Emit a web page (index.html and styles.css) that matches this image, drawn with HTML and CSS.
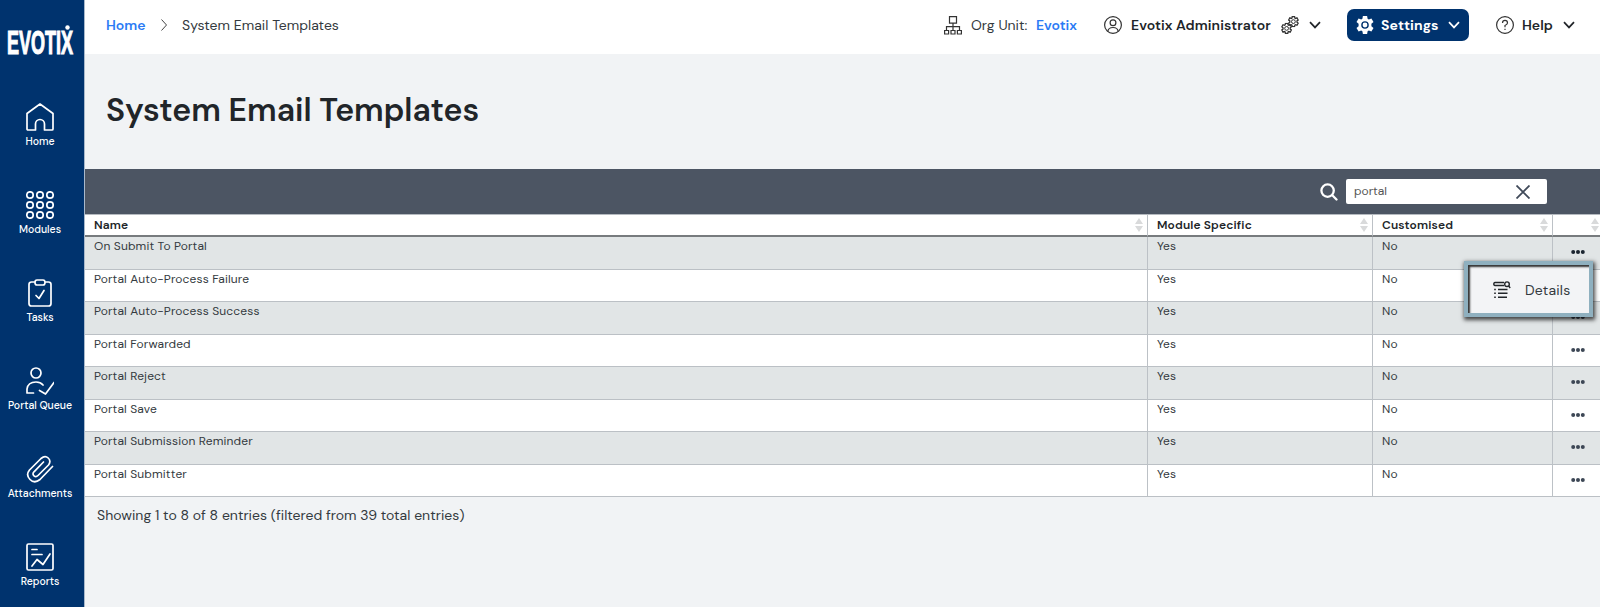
FILE: index.html
```html
<!DOCTYPE html>
<html lang="en">

<head>
    <meta charset="UTF-8">
    <meta name="viewport" content="width=device-width, initial-scale=1.0">
    <title>System Email Templates</title>
    <link rel="stylesheet" href="styles.css">
</head>

<body>
    <!-- Shared icons -->
    <svg class="sprite" width="0" height="0">
        <symbol id="chevron" viewBox="0 0 12 8"><path d="M1 1.2l5 5.2 5-5.2" /></symbol>
        <symbol id="sort" viewBox="0 0 8 14"><path d="M4 0l4 6H0zM0 8h8l-4 6z" /></symbol>
        <symbol id="dots" viewBox="0 0 14 4"><circle cx="2.2" cy="2" r="2" /><circle cx="7" cy="2" r="2" /><circle cx="11.8" cy="2" r="2" /></symbol>
        <symbol id="gear" viewBox="0 0 20 20"><path d="M7.900 1h4.200l.5 2.700 1.200.7 2.600-1 2.100 3.700-2.100 1.700v2.400l2.100 1.700-2.100 3.700-2.600-1-1.200.7-.5 2.700H7.900l-.5-2.700-1.200-.7-2.600 1-2.100-3.700 2.100-1.700V8.800L1.500 7.100l2.100-3.700 2.600 1 1.200-.7z" /></symbol>
    </svg>

    <nav class="sidebar">
        <svg class="logo" width="66" height="30" viewBox="0 0 66 30">
            <text x="0" y="14.800" textLength="66" lengthAdjust="spacingAndGlyphs" transform="scale(1 1.980)">EVOTIX</text>
            <circle cx="60.500" cy="2.500" r="2.200" />
        </svg>
        <a class="nav-item">
            <svg width="28" height="28" viewBox="0 0 28 28"><path d="M1 10.500L14 1l13 9.500V26q0 1-1 1h-7.500v-6a4.500 4.500 0 0 0-9 0v6H2q-1 0-1-1z" /></svg>
            <span>Home</span>
        </a>
        <a class="nav-item">
            <svg width="28" height="28" viewBox="0 0 28 28">
                <circle cx="4" cy="4" r="3.200" /><circle cx="14" cy="4" r="3.200" /><circle cx="24" cy="4" r="3.200" />
                <circle cx="4" cy="14" r="3.200" /><circle cx="14" cy="14" r="3.200" /><circle cx="24" cy="14" r="3.200" />
                <circle cx="4" cy="24" r="3.200" /><circle cx="14" cy="24" r="3.200" /><circle cx="24" cy="24" r="3.200" />
            </svg>
            <span>Modules</span>
        </a>
        <a class="nav-item">
            <svg width="28" height="28" viewBox="0 0 28 28"><path d="M9 3H5.500Q3 3 3 5.500v19Q3 27 5.500 27h17q2.500 0 2.500-2.500v-19Q25 3 22.500 3H19M11 1h6q2 0 2 2.500T17 6h-6Q9 6 9 3.500T11 1zM10 16.500l3 3 5-8" /></svg>
            <span>Tasks</span>
        </a>
        <a class="nav-item">
            <svg width="28" height="28" viewBox="0 0 28 28"><circle cx="10" cy="6" r="5" /><path d="M7.500 26H1v-4q1-7 9-7 4.500 0 7 3M13.500 23.500l6 3.500L28 15.500" /></svg>
            <span>Portal Queue</span>
        </a>
        <a class="nav-item">
            <svg width="28" height="28" viewBox="0 0 28 28"><path d="M26.500 11.500L14 24.500Q8.500 29 4 24.500T3.500 15L15 3.500q4-3.500 7.200-.5t.3 7L12 20.500q-2 2-4 .3t0-4L17.500 7" /></svg>
            <span>Attachments</span>
        </a>
        <a class="nav-item">
            <svg width="28" height="28" viewBox="0 0 28 28"><rect x="1" y="1" width="26" height="26" rx="1.500" /><path d="M6 6.500h5M6 11.500h10M6 23l5-6.500 6 5L24 11" /></svg>
            <span>Reports</span>
        </a>
    </nav>

    <div class="content">
        <header class="topbar">
            <a class="crumb-home">Home</a>
            <svg class="crumb-arrow" width="8" height="12" viewBox="0 0 8 12"><path d="M1.500.5L6.500 6l-5 5.500" /></svg>
            <span class="crumb-page">System Email Templates</span>

            <div class="org">
                <svg class="line-icon" width="18" height="19" viewBox="0 0 18 19"><path d="M5.500.7h7v6.500h-7zM9 7.200v3.500M2.500 14v-3.300h13V14M9 10.700V14M.6 14.500h4v3.500h-4zM7 14.500h4v3.500H7zM13.400 14.500h4v3.500h-4z" /></svg>
                <span class="org-label">Org Unit:</span>
                <a class="org-name">Evotix</a>
            </div>
            <div class="user">
                <svg class="line-icon" width="18" height="18" viewBox="0 0 18 18"><circle cx="9" cy="9" r="8.400" /><circle cx="9" cy="6.800" r="2.900" /><path d="M3.800 15.500q.5-4 5.200-4t5.200 4" /></svg>
                <span class="user-name">Evotix Administrator</span>
                <svg class="line-icon gears" width="18" height="18" viewBox="0 0 18 18">
                    <use href="#gear" x="6.800" y="0" width="11.200" height="11.200" /><circle cx="12.400" cy="5.600" r="1.900" />
                    <use href="#gear" x="0" y="6.800" width="11.200" height="11.200" /><circle cx="5.600" cy="12.400" r="1.900" />
                </svg>
                <svg class="chevron" width="12" height="8"><use href="#chevron" /></svg>
            </div>
            <button class="settings">
                <svg class="settings-gear" width="20" height="20" viewBox="0 0 20 20"><use href="#gear" /><circle cx="10" cy="10" r="3.100" /></svg>
                <span>Settings</span>
                <svg class="chevron" width="12" height="8"><use href="#chevron" /></svg>
            </button>
            <div class="help">
                <svg class="line-icon" width="18" height="18" viewBox="0 0 18 18"><circle cx="9" cy="9" r="8.400" /><path d="M6.500 7q0-2.700 2.500-2.700T11.500 7Q11.500 8.300 9 9.500v1.800M9 12.700V14" /></svg>
                <span class="help-label">Help</span>
                <svg class="chevron" width="12" height="8"><use href="#chevron" /></svg>
            </div>
        </header>

        <h1>System Email Templates</h1>

        <div class="toolbar">
            <svg class="search-icon" width="18" height="18" viewBox="0 0 18 18"><circle cx="7.600" cy="7.600" r="6.200" /><path d="M12.300 12.300l4.200 4.200" /></svg>
            <div class="search-box">
                <span>portal</span>
                <svg width="14" height="14" viewBox="0 0 14 14"><path d="M.5.5l13 13M13.500.5l-13 13" /></svg>
            </div>
        </div>

        <table id="templatesTable">
            <thead>
                <tr>
                    <th class="col-name"><div>Name<svg class="sort" width="8" height="14"><use href="#sort" /></svg></div></th>
                    <th class="col-module"><div>Module Specific<svg class="sort" width="8" height="14"><use href="#sort" /></svg></div></th>
                    <th class="col-custom"><div>Customised<svg class="sort" width="8" height="14"><use href="#sort" /></svg></div></th>
                    <th class="col-actions"><div><svg class="sort" width="8" height="14"><use href="#sort" /></svg></div></th>
                </tr>
            </thead>
            <tbody>
                <tr>
                    <td>On Submit To Portal</td>
                    <td>Yes</td>
                    <td>No</td>
                    <td class="actions active">
                        <svg width="14" height="4"><use href="#dots" /></svg>
                        <div class="menu">
                            <svg width="18" height="18" viewBox="0 0 18 18"><path d="M11 4.500H2Q.8 4.500.8 3T2 1.500h9M5 8.500h9.500M5 12.300h9.500M5 16.300h9M1.200 8.500h1.600M1.200 12.300h1.600M1.200 16.300h1.600" /><circle cx="14" cy="3.200" r="2.300" /><path d="M15.700 5l1.500 2" /></svg>
                            <span>Details</span>
                        </div>
                    </td>
                </tr>
                <tr>
                    <td>Portal Auto-Process Failure</td>
                    <td>Yes</td>
                    <td>No</td>
                    <td class="actions"><svg width="14" height="4"><use href="#dots" /></svg></td>
                </tr>
                <tr>
                    <td>Portal Auto-Process Success</td>
                    <td>Yes</td>
                    <td>No</td>
                    <td class="actions"><svg width="14" height="4"><use href="#dots" /></svg></td>
                </tr>
                <tr>
                    <td>Portal Forwarded</td>
                    <td>Yes</td>
                    <td>No</td>
                    <td class="actions"><svg width="14" height="4"><use href="#dots" /></svg></td>
                </tr>
                <tr>
                    <td>Portal Reject</td>
                    <td>Yes</td>
                    <td>No</td>
                    <td class="actions"><svg width="14" height="4"><use href="#dots" /></svg></td>
                </tr>
                <tr>
                    <td>Portal Save</td>
                    <td>Yes</td>
                    <td>No</td>
                    <td class="actions"><svg width="14" height="4"><use href="#dots" /></svg></td>
                </tr>
                <tr>
                    <td>Portal Submission Reminder</td>
                    <td>Yes</td>
                    <td>No</td>
                    <td class="actions"><svg width="14" height="4"><use href="#dots" /></svg></td>
                </tr>
                <tr>
                    <td>Portal Submitter</td>
                    <td>Yes</td>
                    <td>No</td>
                    <td class="actions"><svg width="14" height="4"><use href="#dots" /></svg></td>
                </tr>
            </tbody>
        </table>

        <p class="info">Showing 1 to 8 of 8 entries (filtered from 39 total entries)</p>
    </div>
</body>

</html>
```

FILE: styles.css
```css
* {
    box-sizing: border-box;
}

body {
    margin: 0;
    display: flex;
    height: 607px;
    overflow: hidden;
    background-color: #f1f3f5;
    color: #212529;
    font-family: "DM Sans", Inter, "Liberation Sans", sans-serif;
}

svg {
    display: block;
    flex: none;
    fill: none;
}

.sprite {
    position: absolute;
}

/* Sidebar */
.sidebar {
    width: 85px;
    flex: none;
    background-color: #00336e;
    border-right: 1px solid #a9b9cb;
}

.logo {
    margin: 25px 0 48px 7px;
    fill: #fff;
    font-family: "Liberation Sans", sans-serif;
    font-size: 17px;
    font-weight: bold;
    overflow: visible;
}

.logo text {
    stroke: #fff;
    stroke-width: 0.6;
}

.nav-item {
    display: flex;
    flex-direction: column;
    align-items: center;
    height: 88px;
    padding-right: 4px;
    color: #fff;
    font-size: 10.5px;
    font-weight: 500;
    line-height: 14px;
    white-space: nowrap;
}

.nav-item svg {
    stroke: #fff;
    stroke-width: 1.7;
    stroke-linejoin: round;
    stroke-linecap: round;
    margin-bottom: 4px;
}

/* Top bar */
.content {
    flex: 1;
    min-width: 0;
}

.topbar {
    display: flex;
    align-items: center;
    height: 54px;
    padding: 0 25px 4px 21px;
    background-color: #fff;
    font-size: 14px;
    white-space: nowrap;
}

.crumb-home,
.org-name {
    color: #2b7bf5;
    font-weight: 600;
}

.crumb-home {
    width: 54px;
}

.crumb-arrow {
    margin-right: 14px;
    stroke: #444;
}

.crumb-page {
    letter-spacing: 0.02px;
    color: #343a40;
}

.org,
.user,
.help {
    display: flex;
    align-items: center;
}

.org {
    margin-left: auto;
    width: 160px;
}

.line-icon {
    margin-right: 9px;
    stroke: #333;
    stroke-width: 1.2;
}

.org-label {
    width: 65px;
    color: #343a40;
}

.user {
    width: 243px;
    font-weight: 600;
}

.user-name {
    width: 150px;
    letter-spacing: 0.1px;
}

.gears {
    margin-right: 10px;
    stroke-width: 1;
}

.gears use {
    stroke-width: 2.3;
}

.chevron {
    stroke: #212529;
    stroke-width: 1.7;
}

.settings {
    display: flex;
    align-items: center;
    width: 122px;
    height: 32px;
    padding: 0 9px 0 8px;
    border: none;
    border-radius: 7px;
    background-color: #00336e;
    color: #fff;
    font: inherit;
    font-weight: 700;
}

.settings span {
    width: 67px;
    margin-left: 6px;
    text-align: left;
    letter-spacing: 0.05px;
}

.settings .chevron {
    margin-left: 1px;
    stroke: #fff;
}

.settings-gear use {
    fill: #fff;
}

.settings-gear circle {
    stroke: #00336e;
    stroke-width: 1.4;
}

.help {
    margin-left: 27px;
    font-weight: 600;
}

.help .line-icon {
    margin-right: 8px;
}

.help-label {
    width: 41px;
}

h1 {
    height: 115px;
    margin: 0;
    padding: 36px 0 0 21px;
    font-size: 32px;
    font-weight: 600;
    letter-spacing: -0.03px;
    line-height: 40px;
}

/* Table toolbar */
.toolbar {
    display: flex;
    align-items: center;
    justify-content: flex-end;
    height: 45px;
    padding-right: 53px;
    background-color: #4c5563;
}

.search-icon {
    margin-right: 8px;
    stroke: #fff;
    stroke-width: 2.3;
    stroke-linecap: round;
}

.search-box {
    display: flex;
    align-items: center;
    justify-content: space-between;
    width: 201px;
    height: 25px;
    padding: 0 17px 2px 8px;
    border-radius: 2px;
    background-color: #fff;
    color: #555;
    font-size: 12px;
}

.search-box svg {
    margin-top: 2px;
    stroke: #404a59;
    stroke-width: 1.8;
}

/* Table */
#templatesTable {
    width: 100%;
    table-layout: fixed;
    border-collapse: separate;
    border-spacing: 0;
    font-size: 12px;
    letter-spacing: 0.14px;
    line-height: 16px;
}

#templatesTable th {
    height: 23px;
    padding: 0 4px 0 9px;
    border-top: 1px solid #b5bac0;
    border-bottom: 2px solid #777b7e;
    border-right: 1px solid #bcc1c6;
    background-color: #fff;
    font-weight: 600;
    text-align: left;
}

#templatesTable th div {
    display: flex;
    align-items: center;
    justify-content: space-between;
}

.col-name {
    width: 1063px;
}

.col-module {
    width: 225px;
}

.col-custom {
    width: 180px;
}

#templatesTable .col-actions {
    padding-right: 1px;
}

#templatesTable .col-actions div {
    justify-content: flex-end;
}

.sort {
    margin-top: -1px;
    fill: #d9dadb;
}

#templatesTable td {
    height: 32.5px;
    padding: 1px 9px 0;
    border-bottom: 1px solid #bbc0c5;
    border-right: 1px solid #bcc1c6;
    background-color: #fff;
    color: #343a40;
    vertical-align: top;
}

#templatesTable tr > :last-child {
    border-right: none;
}

#templatesTable tbody tr:nth-child(odd) td {
    background-color: #e1e5e6;
}

#templatesTable .actions {
    position: relative;
    padding: 13px 0 0 18px;
}

.actions > svg {
    fill: #3d4755;
}

.actions.active > svg {
    fill: #1b2530;
}

/* Row action menu, opens over the rows below */
.menu {
    position: absolute;
    z-index: 1;
    top: 24px;
    right: 7px;
    display: flex;
    align-items: center;
    gap: 14px;
    width: 129px;
    height: 56px;
    padding: 2px 0 0 25px;
    border: 4px solid #8fb0bf;
    background-color: #f3f4f6;
    box-shadow: 1px 2px 4px 1px rgba(0, 0, 0, 0.7), inset 2px 2px 2px #333;
    font-size: 14px;
    letter-spacing: 0.2px;
}

.menu svg {
    stroke: #212529;
    stroke-width: 1.4;
}

.info {
    margin: 8px 0 0 12px;
    color: #343a40;
    font-size: 14px;
    letter-spacing: 0.02px;
    line-height: 20px;
}
```
